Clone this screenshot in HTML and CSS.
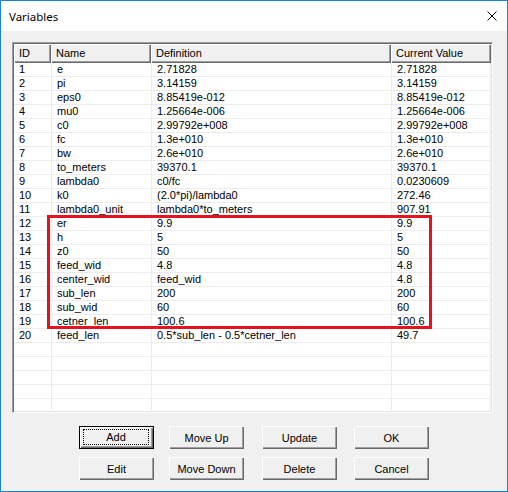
FILE: index.html
```html
<!DOCTYPE html>
<html>
<head>
<meta charset="utf-8">
<link rel="stylesheet" href="styles.css">
</head>
<body>
<div class="window">
  <div class="titlebar">
    <span class="title">Variables</span>
    <svg class="close" width="10" height="10" viewBox="0 0 10 10"><path d="M0.5 0.5 L9.5 9.5 M9.5 0.5 L0.5 9.5" stroke="#000" stroke-width="1" fill="none"/></svg>
  </div>
  <div class="client">
    <div class="listbox">
      <div class="header">
        <div class="hc c-id">ID</div>
        <div class="hc c-name">Name</div>
        <div class="hc c-def">Definition</div>
        <div class="hc c-val">Current Value</div>
      </div>
      <div class="rows">
        <div class="row"><div class="c c-id">1</div><div class="c c-name">e</div><div class="c c-def">2.71828</div><div class="c c-val">2.71828</div></div>
        <div class="row"><div class="c c-id">2</div><div class="c c-name">pi</div><div class="c c-def">3.14159</div><div class="c c-val">3.14159</div></div>
        <div class="row"><div class="c c-id">3</div><div class="c c-name">eps0</div><div class="c c-def">8.85419e-012</div><div class="c c-val">8.85419e-012</div></div>
        <div class="row"><div class="c c-id">4</div><div class="c c-name">mu0</div><div class="c c-def">1.25664e-006</div><div class="c c-val">1.25664e-006</div></div>
        <div class="row"><div class="c c-id">5</div><div class="c c-name">c0</div><div class="c c-def">2.99792e+008</div><div class="c c-val">2.99792e+008</div></div>
        <div class="row"><div class="c c-id">6</div><div class="c c-name">fc</div><div class="c c-def">1.3e+010</div><div class="c c-val">1.3e+010</div></div>
        <div class="row"><div class="c c-id">7</div><div class="c c-name">bw</div><div class="c c-def">2.6e+010</div><div class="c c-val">2.6e+010</div></div>
        <div class="row"><div class="c c-id">8</div><div class="c c-name">to_meters</div><div class="c c-def">39370.1</div><div class="c c-val">39370.1</div></div>
        <div class="row"><div class="c c-id">9</div><div class="c c-name">lambda0</div><div class="c c-def">c0/fc</div><div class="c c-val">0.0230609</div></div>
        <div class="row"><div class="c c-id">10</div><div class="c c-name">k0</div><div class="c c-def">(2.0*pi)/lambda0</div><div class="c c-val">272.46</div></div>
        <div class="row"><div class="c c-id">11</div><div class="c c-name">lambda0_unit</div><div class="c c-def">lambda0*to_meters</div><div class="c c-val">907.91</div></div>
        <div class="row"><div class="c c-id">12</div><div class="c c-name">er</div><div class="c c-def">9.9</div><div class="c c-val">9.9</div></div>
        <div class="row"><div class="c c-id">13</div><div class="c c-name">h</div><div class="c c-def">5</div><div class="c c-val">5</div></div>
        <div class="row"><div class="c c-id">14</div><div class="c c-name">z0</div><div class="c c-def">50</div><div class="c c-val">50</div></div>
        <div class="row"><div class="c c-id">15</div><div class="c c-name">feed_wid</div><div class="c c-def">4.8</div><div class="c c-val">4.8</div></div>
        <div class="row"><div class="c c-id">16</div><div class="c c-name">center_wid</div><div class="c c-def">feed_wid</div><div class="c c-val">4.8</div></div>
        <div class="row"><div class="c c-id">17</div><div class="c c-name">sub_len</div><div class="c c-def">200</div><div class="c c-val">200</div></div>
        <div class="row"><div class="c c-id">18</div><div class="c c-name">sub_wid</div><div class="c c-def">60</div><div class="c c-val">60</div></div>
        <div class="row"><div class="c c-id">19</div><div class="c c-name">cetner_len</div><div class="c c-def">100.6</div><div class="c c-val">100.6</div></div>
        <div class="row"><div class="c c-id">20</div><div class="c c-name">feed_len</div><div class="c c-def">0.5*sub_len - 0.5*cetner_len</div><div class="c c-val">49.7</div></div>
        <div class="row"><div class="c c-id"></div><div class="c c-name"></div><div class="c c-def"></div><div class="c c-val"></div></div>
        <div class="row"><div class="c c-id"></div><div class="c c-name"></div><div class="c c-def"></div><div class="c c-val"></div></div>
        <div class="row"><div class="c c-id"></div><div class="c c-name"></div><div class="c c-def"></div><div class="c c-val"></div></div>
        <div class="row"><div class="c c-id"></div><div class="c c-name"></div><div class="c c-def"></div><div class="c c-val"></div></div>
        <div class="row"><div class="c c-id"></div><div class="c c-name"></div><div class="c c-def"></div><div class="c c-val"></div></div>
      </div>
      <div class="highlight"></div>
    </div>
    <div class="buttons">
      <button class="btn default"><span class="focus">Add</span></button>
      <button class="btn">Move Up</button>
      <button class="btn">Update</button>
      <button class="btn">OK</button>
      <button class="btn">Edit</button>
      <button class="btn">Move Down</button>
      <button class="btn">Delete</button>
      <button class="btn">Cancel</button>
    </div>
  </div>
</div>
</body>
</html>
```
FILE: styles.css
```css
html, body {
  margin: 0;
  padding: 0;
  background: #f0f0f0;
}
.window {
  box-sizing: border-box;
  width: 508px;
  height: 492px;
  border: 1px solid #1883d7;
  display: flex;
  flex-direction: column;
  font-family: "Liberation Sans", Arial, sans-serif;
  font-size: 11px;
  color: #000;
}
.titlebar {
  height: 30px;
  flex: none;
  background: #fff;
  display: flex;
  align-items: center;
  justify-content: space-between;
  padding: 0 10px 0 8px;
}
.title {
  font-family: "Noto Sans", "Liberation Sans", sans-serif;
  font-size: 11.5px;
  padding-top: 1px;
}
.close {
  display: block;
}
.client {
  flex: 1;
  background: #f0f0f0;
  padding: 11px 0 0 11px;
}
.listbox {
  position: relative;
  box-sizing: border-box;
  width: 481px;
  height: 371px;
  border-style: solid;
  border-width: 1px;
  border-color: #a0a0a0 #fff #fff #a0a0a0;
  box-shadow: inset 1px 1px #696969, inset -1px -1px #e3e3e3;
  padding: 1px;
  background: #fff;
  overflow: hidden;
}
.header {
  display: flex;
  height: 19px;
  background: #f0f0f0;
}
.hc {
  box-sizing: border-box;
  height: 19px;
  line-height: 18px;
  padding-left: 5px;
  white-space: nowrap;
  box-shadow: inset 1px 1px #fff, inset -1px -1px #696969, inset -2px -2px #a0a0a0;
}
.c-id { width: 37px; flex: none; }
.c-name { width: 100px; flex: none; }
.c-def { width: 240px; flex: none; }
.c-val { width: 100px; flex: none; }
.rows .c-id { width: 38px; }
.rows .c-val { width: 99px; }
.row {
  display: flex;
  height: 14px;
}
.c {
  box-sizing: border-box;
  height: 14px;
  line-height: 13px;
  padding-left: 5px;
  white-space: nowrap;
  overflow: hidden;
  border-bottom: 1px solid #ececec;
  border-right: 1px solid #ececec;
}
.highlight {
  position: absolute;
  left: 34px;
  top: 172px;
  width: 385px;
  height: 114px;
  box-sizing: border-box;
  border: 3px solid #e3141f;
}
.buttons {
  display: grid;
  grid-template-columns: 90px 93px 92px 75px;
  grid-auto-rows: 23px;
  row-gap: 8px;
  margin: 13px 0 0 67px;
}
.btn {
  box-sizing: border-box;
  width: 75px;
  height: 23px;
  margin: 0;
  padding: 0;
  border: none;
  background: #f0f0f0;
  font-family: "Liberation Sans", Arial, sans-serif;
  font-size: 11px;
  color: #000;
  box-shadow: inset 1px 1px #fff, inset -1px -1px #696969, inset -2px -2px #a0a0a0;
}
.btn.default {
  border: 1px solid #000;
  position: relative;
}
.focus {
  position: absolute;
  left: 3px;
  top: 2px;
  right: 4px;
  bottom: 3px;
  border: 1px dotted #000;
  display: flex;
  align-items: center;
  justify-content: center;
}
```
